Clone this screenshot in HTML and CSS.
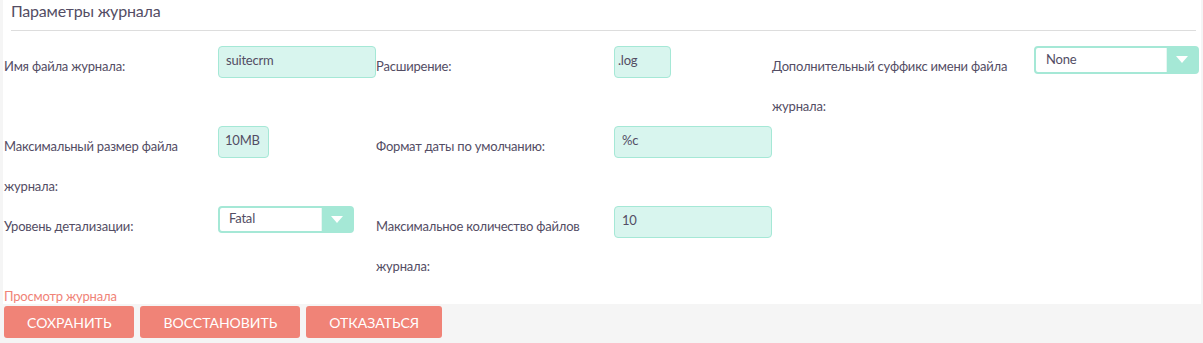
FILE: index.html
```html
<!DOCTYPE html>
<html lang="ru">
<head>
    <meta charset="UTF-8">
    <meta name="viewport" content="width=device-width, initial-scale=1.0">
    <title>Параметры журнала</title>
    <link rel="stylesheet" href="styles.css">
</head>
<body>
    <div class="panel">
        <h4 class="panel-title">Параметры журнала</h4>
        <div class="settings">
            <div class="label">Имя файла журнала:</div>
            <div class="field"><input type="text" class="input wide" value="suitecrm"></div>
            <div class="label">Расширение:</div>
            <div class="field"><input type="text" class="input ext" value=".log"></div>
            <div class="label">Дополнительный суффикс имени файла журнала:</div>
            <div class="field">
                <div class="select suffix">
                    <span class="select-value">None</span>
                    <span class="select-arrow"></span>
                </div>
            </div>

            <div class="label">Максимальный размер файла журнала:</div>
            <div class="field"><input type="text" class="input size" value="10MB"></div>
            <div class="label">Формат даты по умолчанию:</div>
            <div class="field"><input type="text" class="input wide" value="%c"></div>
            <div class="label"></div>
            <div class="field"></div>

            <div class="label">Уровень детализации:</div>
            <div class="field">
                <div class="select level">
                    <span class="select-value">Fatal</span>
                    <span class="select-arrow"></span>
                </div>
            </div>
            <div class="label">Максимальное количество файлов журнала:</div>
            <div class="field"><input type="text" class="input wide" value="10"></div>
        </div>
        <a href="#" class="log-link">Просмотр журнала</a>
    </div>
    <div class="actions">
        <button class="btn">Сохранить</button>
        <button class="btn">Восстановить</button>
        <button class="btn">Отказаться</button>
    </div>
</body>
</html>
```

FILE: styles.css
```css
body {
    margin: 0;
    font-family: Lato, "Open Sans", sans-serif;
    font-size: 13px;
    color: #534d64;
    background-color: #f5f5f5;
}

.panel {
    margin-left: 3px;
    width: 1198px;
    height: 304px;
    background-color: #fff;
    box-sizing: border-box;
    padding-left: 1px;
}

.panel-title {
    margin: 0 5px 0 7px;
    padding-top: 1px;
    height: 29px;
    font-size: 16px;
    font-weight: normal;
    line-height: 20px;
    letter-spacing: -0.2px;
    border-bottom: 1px solid #ddd;
}

.settings {
    display: grid;
    grid-template-columns: 214px 158px 238px 158px 262px 1fr;
    align-items: start;
    margin-top: 15px;
    letter-spacing: -0.2px;
}

.label {
    line-height: 40px;
}

.input {
    display: block;
    box-sizing: border-box;
    height: 32px;
    padding: 0 7px 4px;
    border: 1px solid #a5e8d6;
    border-radius: 4px;
    background-color: #d8f5ee;
    font-family: inherit;
    font-size: 13px;
    letter-spacing: -0.2px;
    color: #534d64;
    outline: none;
}

.input.wide {
    width: 158px;
}

.input.ext {
    width: 57px;
    padding-left: 3px;
}

.input.size {
    width: 51px;
    padding-left: 6px;
}

.select {
    display: flex;
    box-sizing: border-box;
    border: 2px solid #a5e8d6;
    border-radius: 4px;
    background-color: #fff;
}

.select.level {
    width: 136px;
    height: 27px;
}

.select.suffix {
    width: 165px;
    height: 28px;
}

.select-value {
    flex: 1;
    padding-left: 9px;
    line-height: 21px;
    border-right: 1px solid #e6f7f2;
}

.suffix .select-value {
    padding-left: 10px;
    line-height: 22px;
}

.select-arrow {
    width: 30px;
    background-color: #a5e8d6;
    position: relative;
}

.select-arrow::after {
    content: "";
    position: absolute;
    left: 9px;
    top: 8px;
    border-left: 6px solid transparent;
    border-right: 6px solid transparent;
    border-top: 7px solid #fff;
}

.log-link {
    display: block;
    margin-top: 2px;
    line-height: 17px;
    letter-spacing: -0.2px;
    color: #f08377;
    text-decoration: none;
}

.actions {
    display: flex;
    gap: 6px;
    padding: 2px 0 0 4px;
}

.btn {
    height: 32px;
    padding: 0 23px;
    border: none;
    border-radius: 3px;
    background-color: #f08377;
    color: #fff;
    font-family: inherit;
    font-size: 14px;
    text-transform: uppercase;
    cursor: pointer;
}
```
